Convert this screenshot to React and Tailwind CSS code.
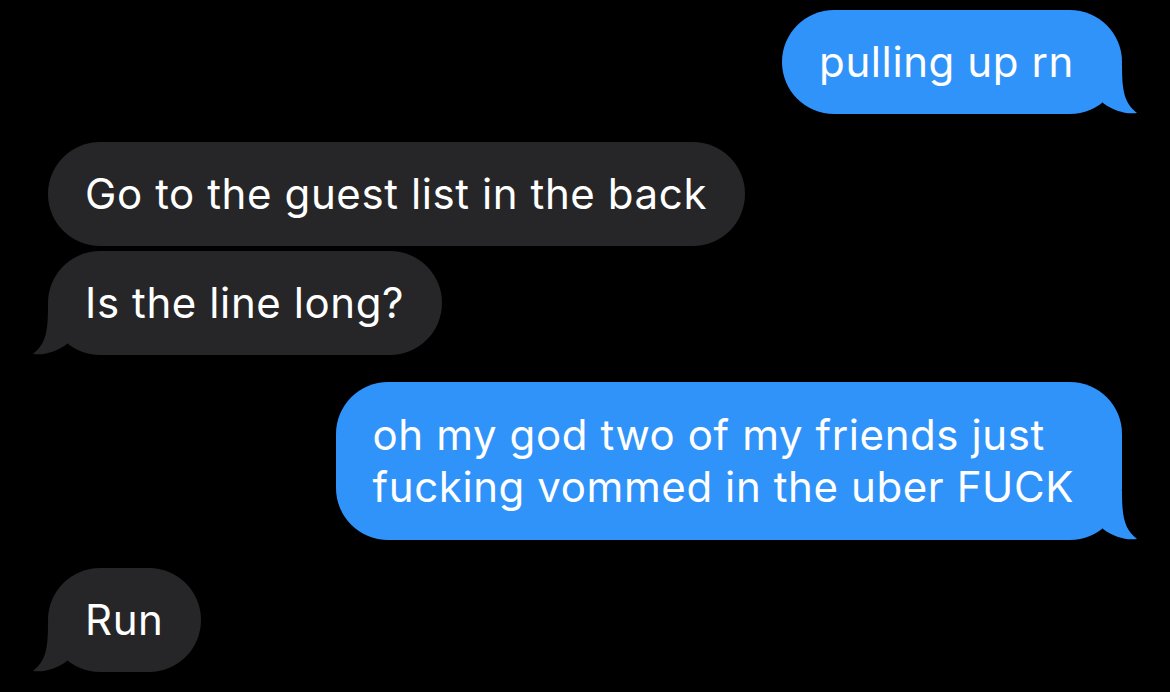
import React from 'react';

const BLUE = '#3093fa';
const GRAY = '#262628';

const Tail = ({ side, color }) => {
  // tail drawn for the left side; mirrored for the right
  const pos = side === 'left' ? 'left-[-18px]' : 'right-[-18px] -scale-x-100';
  return (
    <svg
      className={`absolute bottom-[-1px] ${pos}`}
      width="60"
      height="50"
      viewBox="0 0 60 50"
    >
      <path d="M18 0 C18 25 16 38 3 48 C14 49.5 26 46 37 38 L37 0 Z" fill={color} />
    </svg>
  );
};

const Bubble = ({ text, mine, tail, tall, className = '' }) => {
  const color = mine ? BLUE : GRAY;
  return (
    <div className={`flex ${mine ? 'justify-end' : 'justify-start'} ${className}`}>
      <div
        className={`relative max-w-[820px] rounded-[52px] text-[42px] leading-[52px] tracking-[0.6px] text-white ${tall ? 'py-[27px]' : 'py-[26px]'} ${mine ? 'bg-[#3093fa] pl-[37px] pr-[48px]' : 'bg-[#262628] pl-[37px] pr-[38px]'}`}
      >
        {tail && <Tail side={mine ? 'right' : 'left'} color={color} />}
        <span className="relative">{text}</span>
      </div>
    </div>
  );
};

export default function App() {
  return (
    <div
      className="h-[692px] w-full overflow-hidden bg-black px-[48px] pt-[10px]"
      style={{ fontFamily: 'Inter, "Noto Sans", sans-serif' }}
    >
      <Bubble mine tail text="pulling up rn" />
      <Bubble text="Go to the guest list in the back" className="mt-[28px]" />
      <Bubble tail text="Is the line long?" className="mt-[5px]" />
      <Bubble
        mine
        tail
        tall
        className="mt-[27px]"
        text={
          <>
            oh my god two of my friends just
            <br />
            fucking vommed in the uber FUCK
          </>
        }
      />
      <Bubble tail text="Run" className="mt-[28px]" />
    </div>
  );
}
